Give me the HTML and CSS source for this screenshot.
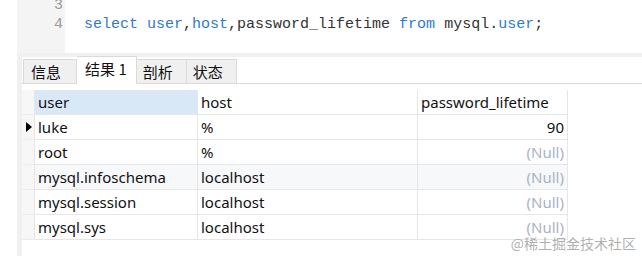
FILE: index.html
```html
<!DOCTYPE html>
<html lang="zh-CN">
<head>
    <meta charset="UTF-8">
    <title>Query</title>
    <link rel="stylesheet" href="styles.css">
</head>
<body>
    <div class="app">
        <div class="editor">
            <div class="gutter">
                <div class="line">3</div>
                <div class="line">4</div>
            </div>
            <div class="code">
                <div class="line">&nbsp;</div>
                <div class="line"><span class="kw">select</span> <span class="kw">user</span>,<span class="kw">host</span>,password_lifetime <span class="kw">from</span> mysql.<span class="kw">user</span>;</div>
            </div>
        </div>

        <div class="results">
            <div class="tabs">
                <div class="tab">信息</div>
                <div class="tab active">结果 1</div>
                <div class="tab">剖析</div>
                <div class="tab">状态</div>
            </div>

            <table class="grid">
                <tr class="head">
                    <td class="mark"></td>
                    <td class="col-user selected">user</td>
                    <td class="col-host">host</td>
                    <td class="col-life">password_lifetime</td>
                </tr>
                <tr>
                    <td class="mark"><span class="cursor"></span></td>
                    <td>luke</td>
                    <td>%</td>
                    <td class="num">90</td>
                </tr>
                <tr>
                    <td class="mark"></td>
                    <td>root</td>
                    <td>%</td>
                    <td class="num null">(Null)</td>
                </tr>
                <tr class="hover">
                    <td class="mark"></td>
                    <td>mysql.infoschema</td>
                    <td>localhost</td>
                    <td class="num null">(Null)</td>
                </tr>
                <tr>
                    <td class="mark"></td>
                    <td>mysql.session</td>
                    <td>localhost</td>
                    <td class="num null">(Null)</td>
                </tr>
                <tr>
                    <td class="mark"></td>
                    <td>mysql.sys</td>
                    <td>localhost</td>
                    <td class="num null">(Null)</td>
                </tr>
            </table>
        </div>

        <div class="watermark">@稀土掘金技术社区</div>
    </div>
</body>
</html>
```

FILE: styles.css
```css
body {
    margin: 0;
    padding: 0 0 0 17px;
    background: #fff;
    font-family: "Noto Sans", "Noto Sans CJK SC", sans-serif;
    color: #111;
}

.app {
    position: relative;
    height: 256px;
    background: #f0f0f0;
    overflow: hidden;
}

.editor {
    display: flex;
    height: 53px;
    overflow: hidden;
}

.gutter {
    width: 46px;
    padding-right: 2px;
    background: #f4f4f4;
    color: #9a9a9a;
    text-align: right;
    font-family: "Liberation Mono", monospace;
    font-size: 15px;
}

.code {
    flex: 1;
    background: #fff;
    padding-left: 19px;
    color: #333;
    font-family: "Liberation Mono", monospace;
    font-size: 15px;
}

.gutter .line:first-child,
.code .line:first-child {
    margin-top: -4px;
}

.line {
    height: 19px;
    line-height: 19px;
    white-space: pre;
}

.kw {
    color: #2f7ad1;
}

.results {
    margin: 4px 0 0 5px;
    height: 199px;
    background: #fff;
}

.tabs {
    display: flex;
    align-items: flex-end;
    height: 26px;
    padding-left: 1px;
    border-bottom: 1px solid #dadada;
}

.tab {
    height: 23px;
    line-height: 23px;
    padding: 0 8px;
    margin-bottom: -1px;
    background: #f0f0f0;
    border: 1px solid #dadada;
    border-left: none;
    font-family: "Noto Sans CJK SC", sans-serif;
    font-size: 15px;
    color: #111;
    white-space: nowrap;
}

.tab:first-child {
    border-left: 1px solid #dadada;
    padding: 0 15px 0 7px;
}

.tab.active {
    height: 26px;
    line-height: 24px;
    background: #fff;
    border-bottom-color: #fff;
    padding: 0 9px 0 8px;
}

.tab:nth-child(3),
.tab:nth-child(4) {
    padding: 0 13px 0 6px;
}

.grid {
    margin-top: 6px;
    border-collapse: collapse;
    font-size: 15px;
}

.grid td {
    height: 24px;
    padding: 0 3px;
    border: 1px solid #e6e6e6;
    border-top: none;
    line-height: 24px;
    white-space: nowrap;
}

.grid .mark {
    width: 12px;
    padding: 0;
    background: #f7f7f7;
    border-left: none;
    border-bottom-color: #ececec;
    position: relative;
}

.col-user {
    width: 156px;
}

.col-host {
    width: 213px;
}

.col-life {
    width: 143px;
}

.selected {
    background: #d9e8f7;
}

.hover td {
    background: #f7f8fa;
}

.hover .mark {
    background: #f7f7f7;
}

.num {
    text-align: right;
}

.null {
    color: #aab3c5;
}

.cursor {
    position: absolute;
    left: 4px;
    top: 7px;
    border-left: 6px solid #000;
    border-top: 5px solid transparent;
    border-bottom: 5px solid transparent;
}

.watermark {
    position: absolute;
    right: 6px;
    bottom: 3px;
    font-family: "Noto Sans CJK SC", sans-serif;
    font-size: 14px;
    color: rgba(140, 140, 140, 0.7);
}
```
